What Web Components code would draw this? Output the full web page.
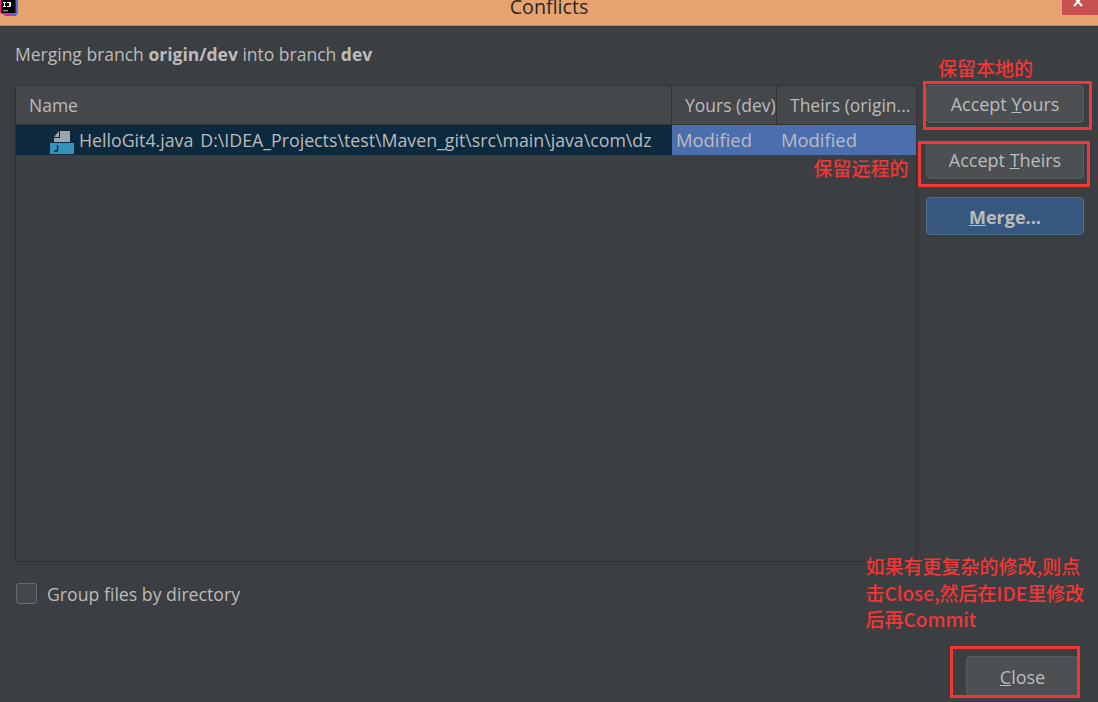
<!DOCTYPE html>
<html><head><meta charset="utf-8">
<style>
html,body{margin:0;padding:0;width:1098px;height:702px;overflow:hidden;background:#3c3f41}
body{font-family:"Open Sans","Noto Sans",sans-serif;font-size:17.5px;color:#bbbbbb}
</style></head>
<body>
<conflicts-dialog>
  <span slot="title">Conflicts</span>
  <span slot="message">Merging branch <b>origin/dev</b> into branch <b>dev</b></span>
  <conflict-table slot="table"></conflict-table>
  <idea-button slot="actions" style="margin-bottom:18px">Accept <u>Y</u>ours</idea-button>
  <idea-button slot="actions" style="margin-bottom:18px">Accept <u>T</u>heirs</idea-button>
  <idea-button slot="actions" primary style="padding:1px 0 0"><b><u>M</u>erge...</b></idea-button>
  <idea-checkbox slot="option">Group files by directory</idea-checkbox>
  <idea-button slot="close" style="width:113px;height:40px;padding:2px 0 0"><u>C</u>lose</idea-button>
</conflicts-dialog>
<red-note style="left:938px;top:55px">保留本地的</red-note>
<red-note style="left:813.500px;top:155px">保留远程的</red-note>
<red-note style="left:865.500px;top:553px;width:232px">如果有更复杂的修改,则点<br>击Close,然后在IDE里修改<br>后再Commit</red-note>
<red-box style="left:923px;top:81px;width:169px;height:49px"></red-box>
<red-box style="left:918px;top:141px;width:172px;height:46px"></red-box>
<red-box style="left:950px;top:646px;width:130px;height:52px"></red-box>
<script>
function def(name,html){
  customElements.define(name,class extends HTMLElement{
    constructor(){super();this.attachShadow({mode:'open'}).innerHTML=html;}
  });
}
def('conflicts-dialog',`<style>
:host{display:flex;flex-direction:column;width:1098px;height:702px;background:#3c3f41;overflow:hidden;position:relative}
.bar{flex:none;height:25px;background:#e6a36f;border-bottom:1px solid #b58762;display:flex;justify-content:space-between;overflow:hidden}
.icon{flex:none;width:18px;height:16px;display:block}
.title{flex:1;text-align:center;color:#26282c;font-size:19.7px;line-height:14px;height:16px;margin-left:-18px;margin-right:-36px}
.x{flex:none;width:36px;height:15px;background:#c75050;display:flex;justify-content:center;position:relative;overflow:hidden}
.main{flex:1;display:flex;flex-direction:column;padding:15px 14px 6px 15px}
.msg{height:44px;line-height:27px;flex:none}
.row{display:flex;flex:none;height:477px}
.tbl{flex:none;width:902px;height:477px}
.side{flex:none;margin-left:9px;width:158px;display:flex;flex-direction:column}
.opt{flex:1;padding-top:20px;display:flex}
.foot{flex:none;display:flex;justify-content:flex-end;padding-right:5px}
</style>
<div class="bar">
  <svg class="icon" viewBox="0 0 18 16"><defs><linearGradient id="g" x1="0" x2="1" y1="0" y2="0"><stop offset="0" stop-color="#f0266f"/><stop offset=".5" stop-color="#a63bc4"/><stop offset="1" stop-color="#3f7bf0"/></linearGradient></defs><path d="M0 0h18v13l-2 3h-11l-2-2h-2l-1-2z" fill="url(#g)"/><rect x="1.500" y="0" width="14" height="13" fill="#000"/><rect x="3" y="10" width="5" height="1.300" fill="#9a9a9a"/><path d="M3 2h3v1h-1v3h1v1h-3v-1h1v-3h-1zM7 2h4v4l-1 1h-3v-1h2v-3h-2z" fill="#fff"/></svg>
  <div class="title"><slot name="title"></slot></div>
  <div class="x"><svg width="12" height="15" viewBox="0 0 12 15" style="margin-left:-5px"><path d="M2 -3L10 6M10 -3L2 6" stroke="#fff" stroke-width="2"/></svg></div>
</div>
<div class="main">
  <div class="msg"><slot name="message"></slot></div>
  <div class="row"><div class="tbl"><slot name="table"></slot></div><div class="side"><slot name="actions"></slot></div></div>
  <div class="opt"><slot name="option"></slot></div>
  <div class="foot"><slot name="close"></slot></div>
</div>`);
def('conflict-table',`<style>
:host{display:flex;flex-direction:column;box-sizing:border-box;width:902px;height:477px;border:1px solid #2f3234;border-top-color:#323537}
.head{display:grid;grid-template-columns:655px 105px 1fr;height:38px;flex:none;background:#45484a;border-bottom:1px solid #323232;line-height:38px}
.head div{padding-left:13px;white-space:nowrap;overflow:hidden;box-sizing:border-box}
.head div+div{border-left:1px solid #323232}
.sel{display:grid;grid-template-columns:656px 105px 1fr;height:30px;flex:none;line-height:30px;white-space:nowrap}
.a{background:#0d293e;display:flex;align-items:center;padding-left:34px;overflow:hidden;font-size:17.75px}
.a svg{flex:none;margin-right:5px}
.a span+span{margin-left:7px}
.b,.c{background:#4b6eaf;padding-left:4px;font-size:18.4px}
</style>
<div class="head"><div>Name</div><div>Yours (dev)</div><div>Theirs (origin...</div></div>
<div class="sel">
 <div class="a"><svg width="24" height="28" viewBox="0 0 24 28"><path d="M10 5H20V16H4V12H10Z" fill="#9aa7b0"/><path d="M9 5V11H4Z" fill="#9aa7b0"/><rect x="0" y="17" width="24" height="11" fill="#3592b8"/><path d="M7.500 19V25H4" fill="none" stroke="#0d293e" stroke-width="1.300"/></svg><span>HelloGit4.java</span><span>D:\\IDEA_Projects\\test\\Maven_git\\src\\main\\java\\com\\dz</span></div>
 <div class="b">Modified</div><div class="c">Modified</div>
</div>`);
def('idea-button',`<style>
:host{display:flex;box-sizing:border-box;height:38px;width:158px;align-items:center;justify-content:center;border:1px solid #5a5d5f;border-radius:4px;background:#4c5052;white-space:nowrap;box-shadow:0 1px 0 #35383a;padding-bottom:1px;font-size:18px}
:host([primary]){background:#365880;border-color:#4c708c;}
</style><span><slot></slot></span>`);
def('idea-checkbox',`<style>
:host{display:flex;align-items:center;height:23px;gap:10px;margin-left:1px;font-size:17.7px}
i{display:block;width:21px;height:21px;box-sizing:border-box;border:1px solid #6b6b6b;border-radius:3px;background:#43494a}
</style><i></i><span><slot></slot></span>`);
def('red-note',`<style>
:host{display:block;position:absolute;color:#f43535;font:500 19px/26.5px "Noto Sans CJK SC","Noto Sans",sans-serif;white-space:nowrap}
</style><slot></slot>`);
def('red-box',`<style>
:host{display:block;position:absolute;box-sizing:border-box;border:3px solid #f43535}
</style>`);
</script>
</body></html>
